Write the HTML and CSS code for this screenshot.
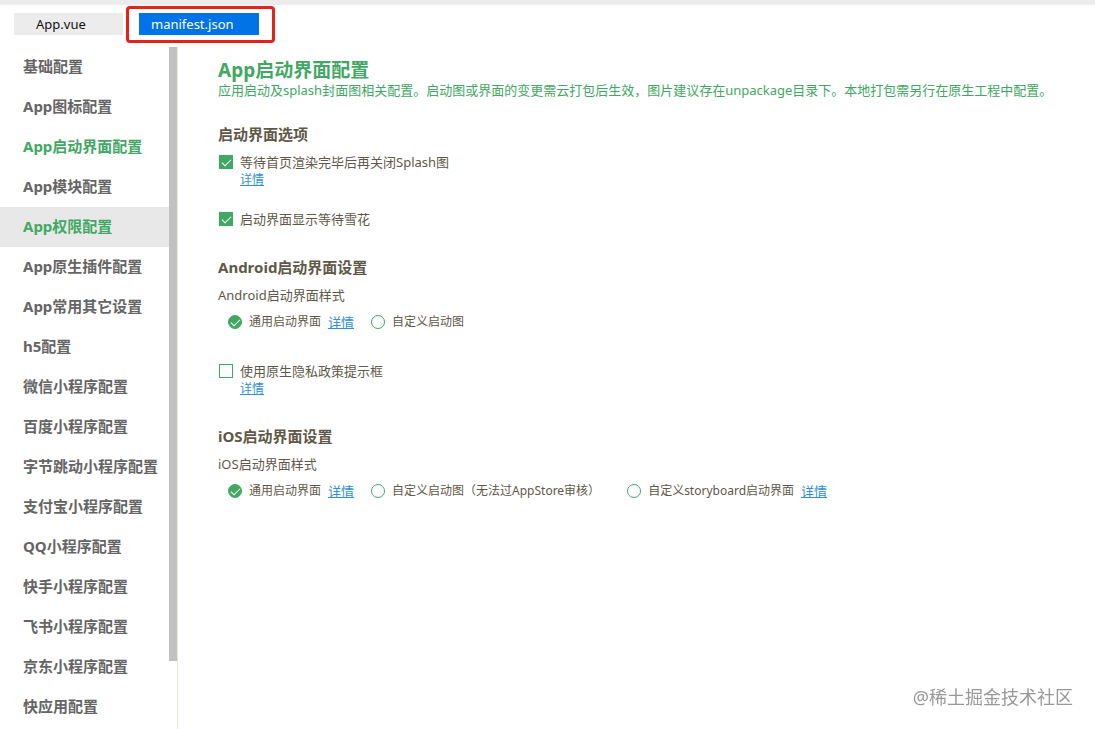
FILE: index.html
```html
<!DOCTYPE html>
<html lang="zh-CN">
<head>
<meta charset="utf-8">
<meta name="viewport" content="width=device-width, initial-scale=1">
<title>manifest.json</title>
<link rel="stylesheet" href="styles.css">
</head>
<body>
<header class="tabs">
  <button class="tab" type="button">App.vue</button>
  <div class="tab-highlight"><button class="tab tab-active" type="button">manifest.json</button></div>
</header>
<div class="workspace">
  <aside class="sidebar">
    <nav class="menu">
      <a class="menu-item" href="#">基础配置</a>
      <a class="menu-item" href="#">App图标配置</a>
      <a class="menu-item current" href="#">App启动界面配置</a>
      <a class="menu-item" href="#">App模块配置</a>
      <a class="menu-item hovered" href="#">App权限配置</a>
      <a class="menu-item" href="#">App原生插件配置</a>
      <a class="menu-item" href="#">App常用其它设置</a>
      <a class="menu-item" href="#">h5配置</a>
      <a class="menu-item" href="#">微信小程序配置</a>
      <a class="menu-item" href="#">百度小程序配置</a>
      <a class="menu-item" href="#">字节跳动小程序配置</a>
      <a class="menu-item" href="#">支付宝小程序配置</a>
      <a class="menu-item" href="#">QQ小程序配置</a>
      <a class="menu-item" href="#">快手小程序配置</a>
      <a class="menu-item" href="#">飞书小程序配置</a>
      <a class="menu-item" href="#">京东小程序配置</a>
      <a class="menu-item" href="#">快应用配置</a>
    </nav>
    <div class="scrollbar"><div class="thumb"></div></div>
  </aside>
  <main class="content">
    <h1 class="title">App启动界面配置</h1>
    <p class="intro">应用启动及splash封面图相关配置。启动图或界面的变更需云打包后生效，图片建议存在unpackage目录下。本地打包需另行在原生工程中配置。</p>

    <section class="section">
      <h2 class="heading">启动界面选项</h2>
      <div class="check-row">
        <input class="box" type="checkbox" id="wait-render" checked>
        <label for="wait-render">等待首页渲染完毕后再关闭Splash图</label>
      </div>
      <a class="link below" href="#">详情</a>
      <div class="check-row spaced">
        <input class="box" type="checkbox" id="show-spinner" checked>
        <label for="show-spinner">启动界面显示等待雪花</label>
      </div>
    </section>

    <section class="section">
      <h2 class="heading">Android启动界面设置</h2>
      <p class="caption">Android启动界面样式</p>
      <div class="radios">
        <div class="option">
          <input class="dot" type="radio" name="android" id="android-common" checked>
          <label for="android-common">通用启动界面</label>
          <a class="link" href="#">详情</a>
        </div>
        <div class="option">
          <input class="dot" type="radio" name="android" id="android-custom">
          <label for="android-custom">自定义启动图</label>
        </div>
      </div>
      <div class="check-row separate">
        <input class="box" type="checkbox" id="privacy">
        <label for="privacy">使用原生隐私政策提示框</label>
      </div>
      <a class="link below" href="#">详情</a>
    </section>

    <section class="section">
      <h2 class="heading">iOS启动界面设置</h2>
      <p class="caption">iOS启动界面样式</p>
      <div class="radios">
        <div class="option">
          <input class="dot" type="radio" name="ios" id="ios-common" checked>
          <label for="ios-common">通用启动界面</label>
          <a class="link" href="#">详情</a>
        </div>
        <div class="option wide">
          <input class="dot" type="radio" name="ios" id="ios-custom">
          <label for="ios-custom">自定义启动图（无法过AppStore审核）</label>
        </div>
        <div class="option">
          <input class="dot" type="radio" name="ios" id="ios-storyboard">
          <label for="ios-storyboard">自定义storyboard启动界面</label>
          <a class="link" href="#">详情</a>
        </div>
      </div>
    </section>
  </main>
</div>
<div class="watermark">@稀土掘金技术社区</div>
</body>
</html>
```
FILE: styles.css
```css
* {
  box-sizing: border-box;
}

body {
  margin: 0;
  min-height: 100vh;
  display: flex;
  flex-direction: column;
  background: #fff;
  color: #5f5848;
  font-family: "Noto Sans", "Noto Sans CJK SC", sans-serif;
  font-size: 13px;
  line-height: 18px;
}

h1, h2, p {
  margin: 0;
}

.tabs {
  display: flex;
  align-items: center;
  gap: 3px;
  height: 47px;
  padding: 0 14px 4px;
  border-top: 5px solid #ececec;
}

.tab {
  width: 109px;
  height: 22px;
  padding: 0 0 0 22px;
  border: 0;
  background: #ececec;
  color: #111;
  font: inherit;
  text-align: left;
}

.tab-active {
  width: 120px;
  padding-left: 12px;
  background: #0073e6;
  color: #fff;
}

.tab-highlight {
  display: flex;
  align-items: center;
  height: 37px;
  padding: 0 13px 0 10px;
  border: 3px solid #e2231a;
  border-radius: 4px;
}

.workspace {
  display: flex;
  flex: 1;
}

.sidebar {
  display: flex;
  flex: none;
  width: 178px;
  border-right: 1px solid #ece8d0;
}

.menu {
  flex: 1;
}

.menu-item {
  display: block;
  height: 40px;
  padding-left: 23px;
  color: #656565;
  font-size: 15px;
  font-weight: 700;
  line-height: 38px;
  text-decoration: none;
  white-space: nowrap;
}

.current, .hovered {
  color: #41a863;
}

.hovered {
  background: #e8e8e8;
}

.scrollbar {
  width: 8px;
}

.thumb {
  height: 90%;
  background: #c1c1c1;
}

.content {
  flex: 1;
  min-width: 0;
  padding: 12px 40px;
}

.title {
  color: #41a863;
  font-size: 19px;
  line-height: 22px;
}

.intro {
  color: #41a863;
}

.section {
  margin-top: 29px;
}

.intro + .section {
  margin-top: 25px;
}

.heading {
  margin-bottom: 9px;
  font-size: 15px;
  line-height: 20px;
}

.check-row {
  display: flex;
  align-items: center;
  gap: 7px;
}

.spaced {
  margin-top: 22px;
}

.separate {
  margin-top: 31px;
}

.box, .dot {
  display: grid;
  place-items: center;
  flex: none;
  width: 14px;
  height: 14px;
  margin: 0;
  border: 1px solid #41a863;
  appearance: none;
  background: #fff;
}

.box {
  margin-left: 1px;
}

.dot {
  border-radius: 50%;
}

.box:checked, .dot:checked {
  background: #41a863;
}

.box:checked::after, .dot:checked::after {
  content: "";
  width: 8px;
  height: 4px;
  border-left: 1px solid #fff;
  border-bottom: 1px solid #fff;
  transform: translateY(-1px) rotate(-45deg);
}

.link {
  color: #2f8fd8;
  text-underline-offset: 1px;
}

.below {
  display: block;
  width: max-content;
  margin-left: 22px;
  font-size: 12px;
  line-height: 17px;
}

.radios {
  display: flex;
  flex-wrap: wrap;
  gap: 17px;
  margin-top: 8px;
  padding-left: 10px;
}

.option {
  display: flex;
  align-items: center;
  gap: 7px;
}

.option label {
  font-size: 12px;
  line-height: 20px;
}

.option .link {
  line-height: 20px;
}

.radios + .separate {
  margin-top: 30px;
}

.wide {
  margin-right: 10px;
}

.watermark {
  position: fixed;
  right: 22px;
  bottom: 20px;
  color: #999;
  font-size: 18px;
  line-height: 24px;
}
```
